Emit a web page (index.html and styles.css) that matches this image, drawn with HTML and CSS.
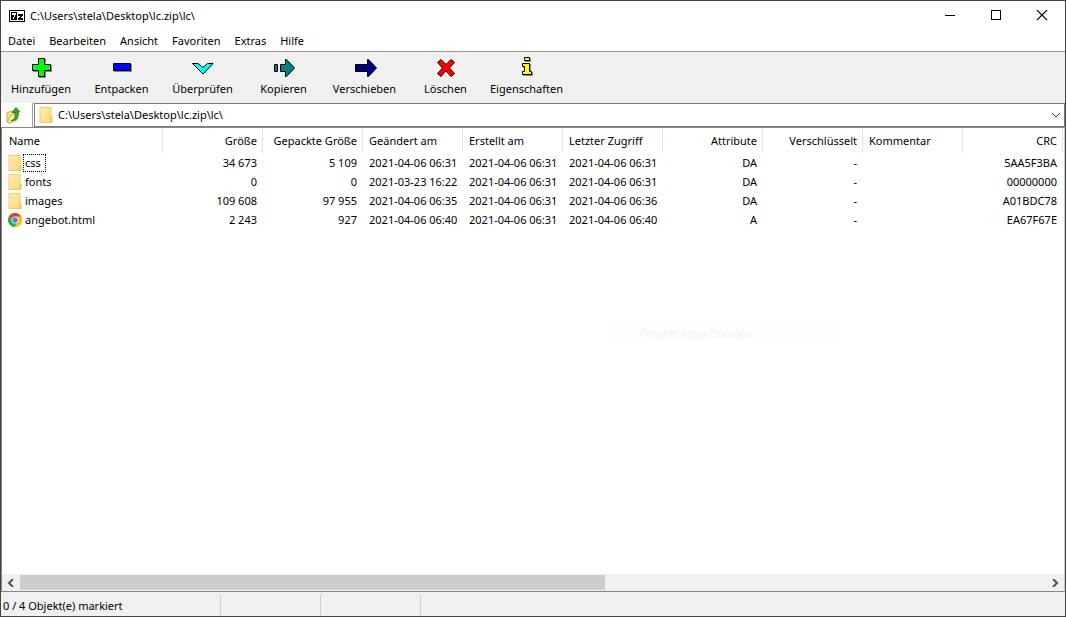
FILE: index.html
```html
<!DOCTYPE html>
<html lang="de">
<head>
<meta charset="utf-8">
<meta name="viewport" content="width=device-width, initial-scale=1">
<title>C:\Users\stela\Desktop\lc.zip\lc\</title>
<link rel="stylesheet" href="styles.css">
</head>
<body>
<svg class="defs" aria-hidden="true">
  <defs>
    <linearGradient id="paper" x1="0" y1="0" x2="1" y2="1">
      <stop offset="0" stop-color="#ffedb0"/><stop offset="1" stop-color="#fbd978"/>
    </linearGradient>
  </defs>
  <symbol id="folder" viewBox="0 0 16 18">
    <path d="M2 1.500h11v10h1v5H2z" fill="url(#paper)" stroke="#efcd72"/>
    <path d="M12.500 16v-4l1.500-1v5z" fill="#fbe08d" stroke="#e8c260" stroke-width=".8"/>
  </symbol>
</svg>
<div class="window">
  <header class="titlebar">
    <svg class="logo" width="16" height="12" viewBox="0 0 16 12" shape-rendering="crispEdges" aria-hidden="true">
      <path fill="#000" d="M0 0h16v12H0z"/>
      <path fill="#fff" d="M1 1h14v10H1z"/>
      <path fill="#000" d="M2 2h6v8H2z"/>
      <path fill="#fff" d="M3 3h4v2H6v2H5v2H4V7h1V5H3z"/>
      <path fill="#000" d="M9 4h5v2h-1v1h-1v1h2v2H9V8h1V7h1V6H9z"/>
    </svg>
    <h1 class="title">C:\Users\stela\Desktop\lc.zip\lc\</h1>
    <div class="controls">
      <button class="control" type="button" aria-label="Minimieren"><svg width="12" height="12" viewBox="0 0 12 12" shape-rendering="crispEdges"><path d="M1 5.500h10" stroke="#000"/></svg></button>
      <button class="control" type="button" aria-label="Maximieren"><svg width="12" height="12" viewBox="0 0 12 12" shape-rendering="crispEdges"><path d="M1.500 .5h9v9h-9z" fill="none" stroke="#000"/></svg></button>
      <button class="control" type="button" aria-label="Schließen"><svg width="12" height="12" viewBox="0 0 12 12"><path d="M1 0l10 10M11 0L1 10" stroke="#000" stroke-width="1.100"/></svg></button>
    </div>
  </header>

  <nav class="menubar">
    <button class="menu" type="button">Datei</button>
    <button class="menu" type="button">Bearbeiten</button>
    <button class="menu" type="button">Ansicht</button>
    <button class="menu" type="button">Favoriten</button>
    <button class="menu" type="button">Extras</button>
    <button class="menu" type="button">Hilfe</button>
  </nav>

  <div class="toolbar">
    <button class="tool" type="button">
      <svg class="tool-icon" viewBox="0 0 24 24"><path d="M10 3h7v6h6v7h-6v6h-7v-6H4V9h6z" fill="#888"/><path d="M9.500 2.500h6v6h6v6h-6v6h-6v-6h-6v-6h6z" fill="#0f0" stroke="#000"/></svg>
      Hinzufügen</button>
    <button class="tool" type="button">
      <svg class="tool-icon" viewBox="0 0 24 24"><path d="M4 8h18v8H4z" fill="#888"/><path d="M3.500 7.500h17v7h-17z" fill="#00f" stroke="#000"/></svg>
      Entpacken</button>
    <button class="tool" type="button">
      <svg class="tool-icon" viewBox="0 0 24 24"><path d="M1.500 7.500H7l5 4 4.500-4H22L12 18z" fill="#0ff" stroke="#000"/></svg>
      Überprüfen</button>
    <button class="tool" type="button">
      <svg class="tool-icon" viewBox="0 0 24 24"><path d="M2.500 8.500h3v7h-3zM8.500 8.500h5v-5h1l8 8.500-8 8.500h-1v-5h-5z" fill="#008080" stroke="#000"/></svg>
      Kopieren</button>
    <button class="tool" type="button">
      <svg class="tool-icon" viewBox="0 0 24 24"><path d="M2.500 8.500h12v-5h1l8 8.500-8 8.500h-1v-5h-12z" fill="#000080" stroke="#000"/></svg>
      Verschieben</button>
    <button class="tool" type="button">
      <svg class="tool-icon" viewBox="0 0 24 24"><path d="M7 3.500l5 5 5-5 3.500 3-5 5.500 5 5.500-3.500 3-5-5.500-5 5.500-3.500-3 5-5.500-5-5.500z" fill="#f00" stroke="#000"/></svg>
      Löschen</button>
    <button class="tool" type="button">
      <svg class="tool-icon" viewBox="0 0 24 24"><path d="M10 2h6v4h-6zM8 8h8v8h2v4H8v-4h2v-4H8z" fill="#888"/><path d="M9.500 1.500h5v3h-5zM7.500 7.500h7v8h2v3h-9v-3h2v-5h-2z" fill="#ff0" stroke="#000"/></svg>
      Eigenschaften</button>
  </div>

  <div class="address">
    <button class="up" type="button" aria-label="Übergeordneter Ordner">
      <svg width="16" height="18" viewBox="0 0 16 18">
        <path d="M1 7l4-2 2 1 4-1v9l-8 3-2-1z" fill="#f7df8c" stroke="#d6ac43"/>
        <path d="M1.500 16L4 10l8-3-2 7.500-7 2.500z" fill="#ffef9f" stroke="#d8b24c"/>
        <path d="M5 14.500c4-.5 4.500-4 4-8H6L10 1.500l4 4.500h-2c1 5-1 9-7 8.500z" fill="#38a91c" stroke="#14780f" stroke-width=".8"/>
      </svg>
    </button>
    <label class="pathbox">
      <svg class="path-icon" aria-hidden="true"><use href="#folder"/></svg>
      <input class="path" type="text" aria-label="Pfad" value="C:\Users\stela\Desktop\lc.zip\lc\">
      <svg width="10" height="6" viewBox="0 0 10 6" aria-hidden="true"><path d="M1 1l4 4 4-4" fill="none" stroke="#444"/></svg>
    </label>
  </div>

  <main class="list">
    <div class="viewport">
      <table class="files">
        <colgroup><col class="col-name"><col><col><col><col><col><col><col><col><col></colgroup>
        <thead>
          <tr><th>Name</th><th class="num">Größe</th><th class="num">Gepackte Größe</th><th>Geändert am</th><th>Erstellt am</th><th>Letzter Zugriff</th><th class="num">Attribute</th><th class="num">Verschlüsselt</th><th>Kommentar</th><th class="num">CRC</th></tr>
        </thead>
        <tbody>
          <tr><td><span class="file"><svg class="file-icon" aria-hidden="true"><use href="#folder"/></svg><span class="name focused">css</span></span></td><td class="num">34 673</td><td class="num">5 109</td><td>2021-04-06 06:31</td><td>2021-04-06 06:31</td><td>2021-04-06 06:31</td><td class="num">DA</td><td class="num">-</td><td></td><td class="num">5AA5F3BA</td></tr>
          <tr><td><span class="file"><svg class="file-icon" aria-hidden="true"><use href="#folder"/></svg><span class="name">fonts</span></span></td><td class="num">0</td><td class="num">0</td><td>2021-03-23 16:22</td><td>2021-04-06 06:31</td><td>2021-04-06 06:31</td><td class="num">DA</td><td class="num">-</td><td></td><td class="num">00000000</td></tr>
          <tr><td><span class="file"><svg class="file-icon" aria-hidden="true"><use href="#folder"/></svg><span class="name">images</span></span></td><td class="num">109 608</td><td class="num">97 955</td><td>2021-04-06 06:35</td><td>2021-04-06 06:31</td><td>2021-04-06 06:36</td><td class="num">DA</td><td class="num">-</td><td></td><td class="num">A01BDC78</td></tr>
          <tr><td><span class="file"><svg class="file-icon" viewBox="0 0 16 18" aria-hidden="true">
            <circle cx="8" cy="9" r="7" fill="#fbc116"/>
            <path d="M8 9L1.900 5.500A7 7 0 0 1 14.100 5.500z" fill="#e33b2e"/>
            <path d="M1.900 5.500A7 7 0 0 0 7.500 16L10.800 10.600 8 9z" fill="#2da94f"/>
            <path d="M8 5.500h6.100A7 7 0 0 1 7.500 16L11 10.600z" fill="#fbc116"/>
            <circle cx="8" cy="9" r="3.500" fill="#fff"/><circle cx="8" cy="9" r="2.700" fill="#4285f4"/>
          </svg><span class="name">angebot.html</span></span></td><td class="num">2 243</td><td class="num">927</td><td>2021-04-06 06:40</td><td>2021-04-06 06:31</td><td>2021-04-06 06:40</td><td class="num">A</td><td class="num">-</td><td></td><td class="num">EA67F67E</td></tr>
        </tbody>
      </table>
      <div class="ghost">Fenster ausschneiden</div>
    </div>
    <div class="scrollbar">
      <button class="scroll-arrow" type="button" aria-label="Nach links"><svg width="8" height="8" viewBox="0 0 8 8"><path d="M6 0L2 4l4 4" fill="none" stroke="#505050" stroke-width="2"/></svg></button>
      <div class="track"><div class="thumb"></div></div>
      <button class="scroll-arrow" type="button" aria-label="Nach rechts"><svg width="8" height="8" viewBox="0 0 8 8"><path d="M2 0l4 4-4 4" fill="none" stroke="#505050" stroke-width="2"/></svg></button>
    </div>
  </main>

  <footer class="status">
    <span class="pane pane-wide">0 / 4 Objekt(e) markiert</span>
    <span class="pane"></span>
    <span class="pane"></span>
  </footer>
</div>
</body>
</html>
```
FILE: styles.css
```css
* {
  box-sizing: border-box;
}

body {
  margin: 0;
  background: #fff;
  color: #000;
  font: 11px/16px "Noto Sans", "Open Sans", sans-serif;
}

button,
input {
  margin: 0;
  padding: 0;
  border: 0;
  background: none;
  color: inherit;
  font: inherit;
}

.defs {
  position: absolute;
  width: 0;
  height: 0;
}

.window {
  display: flex;
  flex-direction: column;
  min-height: 100vh;
  border: 1px solid #444;
}

.titlebar {
  display: flex;
  align-items: center;
  height: 30px;
  padding-left: 8px;
}

.title {
  flex: 1;
  margin: 0 0 0 5px;
  font-size: 11px;
  font-weight: 400;
}

.controls {
  display: flex;
  height: 100%;
}

.control {
  display: grid;
  place-items: center;
  width: 46px;
}

.menubar {
  display: flex;
  height: 20px;
}

.menu {
  padding: 0 7px;
}

.toolbar {
  display: flex;
  height: 52px;
  border-top: 1px solid #999;
  background: #f0f0f0;
}

.tool {
  display: flex;
  flex-direction: column;
  align-items: center;
  gap: 1px;
  width: 81px;
  padding-top: 4px;
}

.tool:first-child {
  width: 80px;
}

.tool-icon {
  width: 24px;
  height: 24px;
}

.address {
  display: flex;
  height: 24px;
}

.up {
  display: grid;
  place-items: center;
  width: 32px;
  padding-right: 6px;
  border-right: 1px solid #a0a0a0;
}

.pathbox {
  display: flex;
  flex: 1;
  align-items: center;
  margin-left: 1px;
  padding: 0 3px;
  border: 1px solid #7a7a7a;
}

.path-icon {
  width: 16px;
  height: 18px;
}

.path {
  flex: 1;
  min-width: 0;
  padding-left: 4px;
}

.list {
  display: flex;
  flex: 1;
  flex-direction: column;
  border: 1px solid #828790;
  border-right-color: #ccc;
}

.viewport {
  position: relative;
  flex: 1;
  overflow: hidden;
}

.files {
  width: 1061px;
  border-collapse: separate;
  border-spacing: 0;
  table-layout: fixed;
}

.col-name {
  width: 161px;
}

th,
td {
  height: 19px;
  padding: 0 6px;
  font-weight: 400;
  text-align: left;
  white-space: nowrap;
}

th {
  height: 25px;
  border-right: 1px solid #e5e5e5;
}

th.num {
  padding-right: 5px;
}

th:first-child {
  padding-left: 7px;
}

td:first-child {
  padding: 0 0 0 5px;
}

.num {
  text-align: right;
}

.file {
  display: flex;
  align-items: center;
  height: 19px;
}

.file-icon {
  width: 16px;
  height: 18px;
}

.name {
  padding: 0 1px;
  border: 1px solid transparent;
}

.focused {
  padding-right: 4px;
  border: 1px dotted #000;
}

.ghost {
  position: absolute;
  top: 194px;
  left: 608px;
  width: 228px;
  height: 22px;
  padding: 3px 30px;
  background: #fcfdff;
  color: #f3f4f7;
}

.scrollbar {
  display: flex;
  height: 17px;
  background: #f0f0f0;
}

.scroll-arrow {
  display: grid;
  place-items: center;
  width: 18px;
}

.track {
  flex: 1;
  padding: 1px 0;
}

.thumb {
  width: 57%;
  height: 100%;
  background: #cdcdcd;
}

.status {
  display: flex;
  height: 24px;
  padding-top: 2px;
  background: #f0f0f0;
}

.pane {
  width: 100px;
  padding: 4px 2px 0;
  border-right: 1px solid #d0d0d0;
}

.pane-wide {
  width: 220px;
}
```
